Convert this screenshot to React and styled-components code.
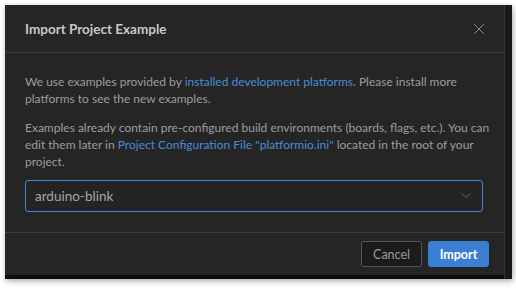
import React from "react";
import styled, { createGlobalStyle } from "styled-components";

const GlobalStyle = createGlobalStyle`
  html, body {
    margin: 0;
    padding: 0;
    background: #ffffff;
  }
  body {
    font-family: Lato, "Open Sans", sans-serif;
  }
`;

const Page = styled.div`
  padding: 5px 0 0 5px;
  width: 516px;
  height: 289px;
  box-sizing: border-box;
`;

const Window = styled.div`
  display: flex;
  width: 507px;
  background: #0d0d0d;
  box-shadow: 1px 2px 6px rgba(0, 0, 0, 0.35);
`;

const SideStrip = styled.div`
  width: 7px;
  background: #1a1a1a;
  border-left: 1px solid #333;
`;

const Dialog = styled.div`
  width: 500px;
  margin-bottom: 4px;
  background: #252525;
  display: flex;
  flex-direction: column;
`;

const Header = styled.div`
  height: 47px;
  display: flex;
  align-items: center;
  justify-content: space-between;
  padding: 0 19px 0 20px;
  border-bottom: 1px solid #3a3a3a;
`;

const Title = styled.h1`
  margin: 0;
  font-size: 13.5px;
  font-weight: 700;
  color: #c8c8c8;
`;

const CloseButton = styled.button`
  border: none;
  background: transparent;
  padding: 0;
  width: 12px;
  height: 12px;
  display: flex;
  cursor: pointer;
`;

const Body = styled.div`
  padding: 20px 10px 20px 20px;
  display: flex;
  flex-direction: column;
`;

const Text = styled.p`
  margin: 0 0 ${(p) => p.$gap || 0}px;
  font-size: 12px;
  line-height: 17px;
  color: #9d9d9d;
`;

const Link = styled.a`
  color: #4a8bd9;
  text-decoration: none;
`;

const Select = styled.div`
  height: 32px;
  margin-right: 11px;
  box-sizing: border-box;
  border: 1px solid #3f86dc;
  border-radius: 3px;
  display: flex;
  align-items: center;
  justify-content: space-between;
  padding: 0 11px 0 9px;
  font-size: 13.5px;
  color: #a6a6a6;
  background: #242424;
`;

const Footer = styled.div`
  border-top: 1px solid #3a3a3a;
  height: 42px;
  display: flex;
  align-items: center;
  justify-content: flex-end;
  gap: 6px;
  padding: 0 15px;
`;

const Button = styled.button`
  height: 26px;
  width: 61px;
  box-sizing: border-box;
  border-radius: 3px;
  font-family: inherit;
  font-size: 12.5px;
  padding: 0;
  border: 1px solid ${(p) => (p.$primary ? "#3b7fd4" : "#555")};
  background: ${(p) => (p.$primary ? "#3b7fd4" : "#1b1b1b")};
  color: ${(p) => (p.$primary ? "#ffffff" : "#9a9a9a")};
  font-weight: ${(p) => (p.$primary ? 700 : 400)};
  cursor: pointer;
`;

export default function App() {
  return (
    <Page>
      <GlobalStyle />
      <Window>
        <Dialog>
          <Header>
            <Title>Import Project Example</Title>
            <CloseButton aria-label="Close">
              <svg width="12" height="12" viewBox="0 0 12 12">
                <path d="M1 1 L11 11 M11 1 L1 11" stroke="#888" strokeWidth="1" fill="none" />
              </svg>
            </CloseButton>
          </Header>
          <Body>
            <Text $gap={12}>
              We use examples provided by <Link href="#">installed development platforms</Link>. Please install more platforms to see the new examples.
            </Text>
            <Text $gap={10}>
              Examples already contain pre-configured build environments (boards, flags, etc.). You can edit them later in{" "}
              <Link href="#">Project Configuration File "platformio.ini"</Link> located in the root of your project.
            </Text>
            <Select>
              <span>arduino-blink</span>
              <svg width="10" height="6" viewBox="0 0 10 6">
                <path d="M1 0.5 L5 4.5 L9 0.5" stroke="#666" strokeWidth="1" fill="none" />
              </svg>
            </Select>
          </Body>
          <Footer>
            <Button>Cancel</Button>
            <Button $primary>Import</Button>
          </Footer>
        </Dialog>
        <SideStrip />
      </Window>
    </Page>
  );
}
